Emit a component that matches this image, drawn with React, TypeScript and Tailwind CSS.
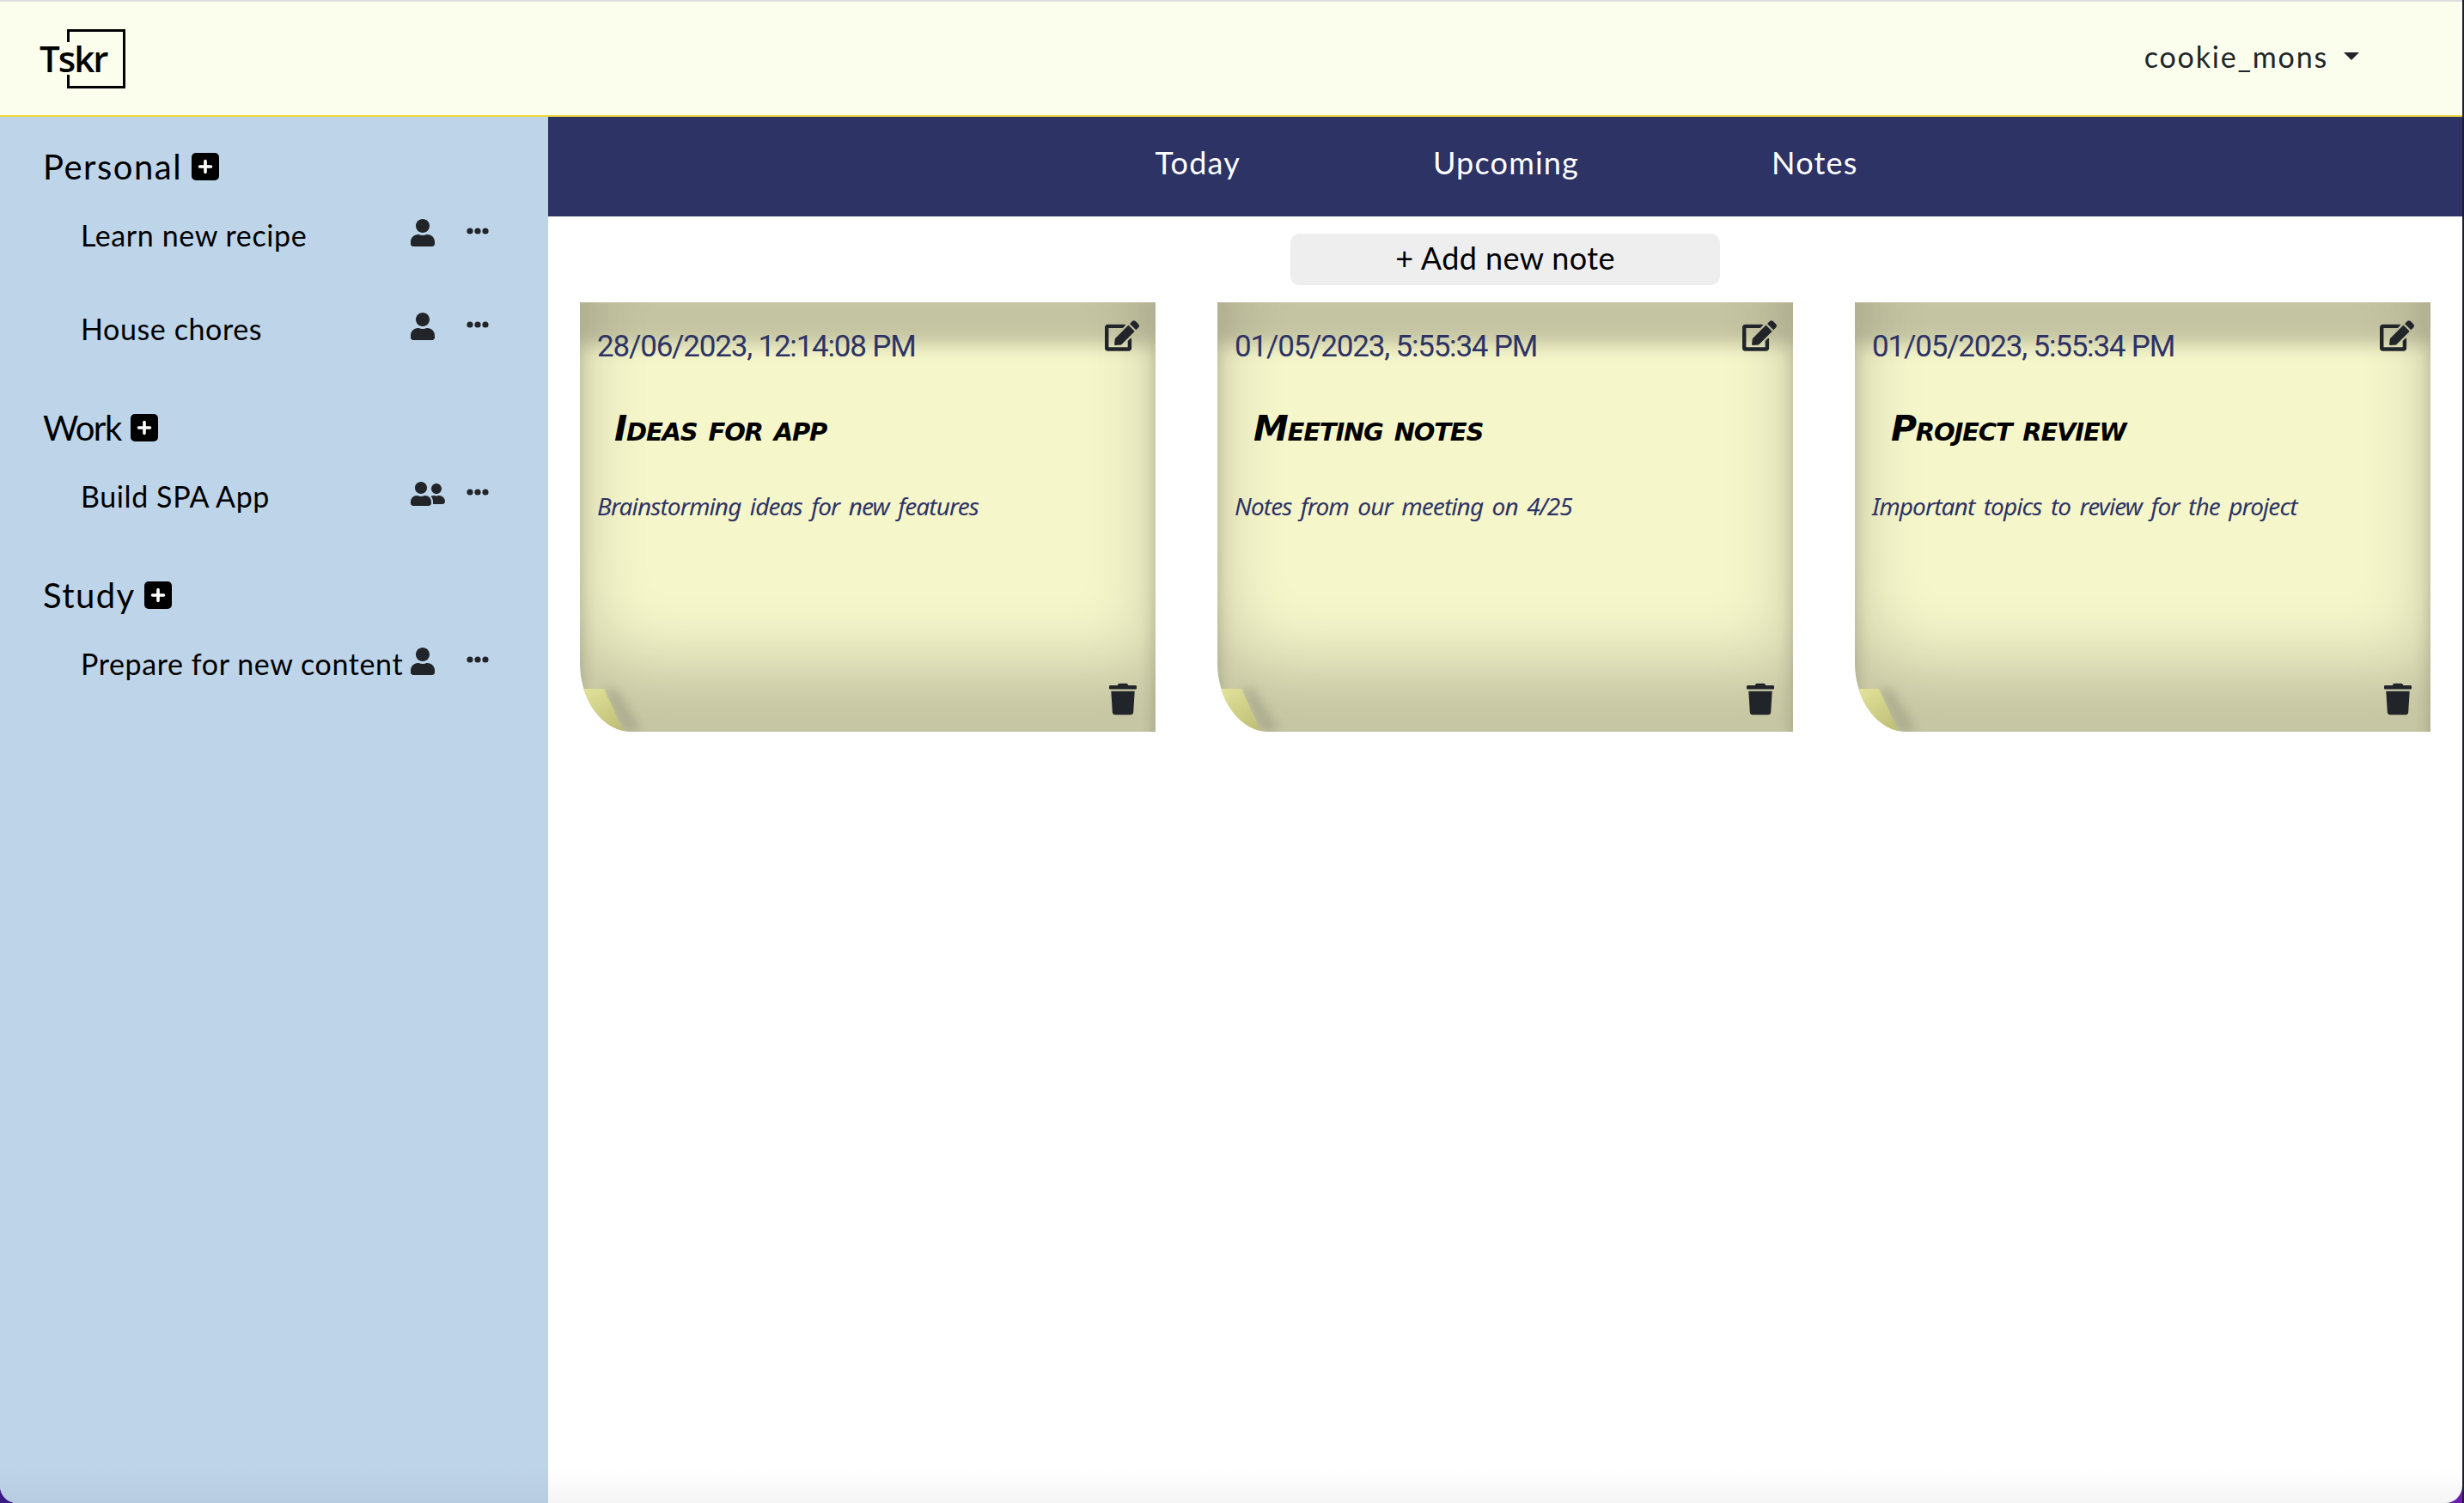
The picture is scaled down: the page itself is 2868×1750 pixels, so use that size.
import React from 'react';
import { FaUser, FaUserFriends, FaEdit, FaTrash } from 'react-icons/fa';

const GROUPS = [
  {
    name: 'Personal',
    spacing: 'tracking-[1.5px]',
    tasks: [
      { title: 'Learn new recipe', shared: false },
      { title: 'House chores', shared: false },
    ],
  },
  { name: 'Work', spacing: 'tracking-[-1.5px]', tasks: [{ title: 'Build SPA App', shared: true }] },
  { name: 'Study', spacing: 'tracking-[1.4px]', tasks: [{ title: 'Prepare for new content', shared: false }] },
];

const NOTES = [
  { date: '28/06/2023, 12:14:08 PM', title: 'Ideas for app', body: 'Brainstorming ideas for new features', titleOffset: 'pl-[20px]' },
  { date: '01/05/2023, 5:55:34 PM', title: 'Meeting notes', body: 'Notes from our meeting on 4/25', titleOffset: 'pl-[22px]' },
  { date: '01/05/2023, 5:55:34 PM', title: 'Project review', body: 'Important topics to review for the project', titleOffset: 'pl-[22px]' },
];

function Note({ note, id }: { note: (typeof NOTES)[number]; id: number }) {
  return (
    <div className="relative w-[670px] h-[500px] overflow-hidden rounded-bl-[60px_80px] bg-[#f6f6cb] shadow-[inset_0_-80px_80px_rgba(0,0,0,0.2),inset_0_50px_20px_rgba(0,0,0,0.2)] px-[20px] pt-[26px]">
      <div className="flex justify-between items-start">
        <span className="text-[35px] leading-[52px] text-[#2d3365] font-['Roboto',sans-serif] tracking-[-1.2px]">{note.date}</span>
        <FaEdit className="text-[#212529] w-[40px] h-[38px] -mr-[1px] -mt-[6px]" />
      </div>
      <h2 className={`${note.titleOffset} mt-[44px] text-[41px] leading-[50px] font-bold italic text-black [font-variant:small-caps] font-['DejaVu_Sans',sans-serif] tracking-[-1.2px]`}>
        {note.title}
      </h2>
      <p className="mt-[44px] text-[28px] leading-[42px] italic text-[#2d3365] font-['Noto_Sans',sans-serif] tracking-[-0.9px] [word-spacing:4px]">{note.body}</p>
      <FaTrash className="absolute right-[22px] bottom-[18px] text-[#212529] w-[32px] h-[40px]" />
      {/* page curl in the lower left corner */}
      <svg className="absolute left-0 bottom-0" width="110" height="70" viewBox="0 0 110 70">
        <defs>
          <linearGradient id={`curl-${id}`} x1="0.1" y1="0" x2="0.8" y2="1">
            <stop offset="0" stopColor="#e2e29a" />
            <stop offset="1" stopColor="#bfbf78" />
          </linearGradient>
        </defs>
        <path className="blur-[6px]" d="M28 20 L51 70 L72 70 L42 20 Z" fill="#000" fillOpacity="0.13" />
        <path d="M0 20 L28 20 L51 70 L0 70 Z" fill={`url(#curl-${id})`} />
      </svg>
    </div>
  );
}

export default function App() {
  return (
    <div className="w-[2868px] h-[1750px] bg-[#1e1f33] overflow-hidden font-['Lato',sans-serif]">
      <div className="relative w-[2866px] h-[1750px] bg-gradient-to-r from-[#3b1a86] to-[#6a1fa8]">
        <div className="relative w-full h-full overflow-hidden rounded-b-[20px] bg-white flex flex-col">
          {/* top bar */}
          <header className="h-[136px] shrink-0 bg-[#fbfeec] border-t-2 border-t-[#dedede] border-b-2 border-b-[#f0d93f] flex items-center justify-between pl-[46px] pr-[120px]">
            <div className="relative w-[100px] h-[69px]">
              <div className="absolute left-[32px] top-0 w-[68px] h-[69px] border-[3px] border-black" />
              <span className="absolute left-0 top-[15px] text-[42px] leading-[38px] font-semibold text-black font-['Open_Sans',sans-serif] tracking-[-2px] bg-[#fbfeec]">Tskr</span>
            </div>
            <div className="flex items-center gap-[18px] text-[#212529] -mt-[4px]">
              <span className="text-[34px] leading-[48px] tracking-[1.8px]">cookie_mons</span>
              <span className="w-0 h-0 mt-[-2px] border-x-[9px] border-x-transparent border-t-[9px] border-t-[#212529]" />
            </div>
          </header>
          <div className="flex flex-1 min-h-0">
            {/* left rail */}
            <aside className="w-[638px] shrink-0 bg-[#bed4e9] pl-[50px] pt-[32px]">
              {GROUPS.map((group) => (
                <section key={group.name} className="mb-[32px]">
                  <div className={`${group.spacing} flex items-center gap-[11px] h-[52px] text-[40px] leading-[52px] text-black`}>
                    <span>{group.name}</span>
                    <svg width="32" height="32" viewBox="0 0 32 32">
                      <rect width="32" height="32" rx="5" fill="#000" />
                      <path d="M16 9.5v13M9.5 16h13" stroke="#fff" strokeWidth="3.6" strokeLinecap="round" />
                    </svg>
                  </div>
                  <ul className="mt-[23px]">
                    {group.tasks.map((task) => (
                      <li key={task.title} className="flex items-center h-[109px] pl-[44px] pb-[48px] last:h-[88px] last:pb-[26px]">
                        <span className="w-[384px] text-[34px] leading-[48px] text-black whitespace-nowrap tracking-[0.6px]">{task.title}</span>
                        <div className="w-[65px] -mt-[6px]">
                          {task.shared ? (
                            <FaUserFriends className="w-[40px] h-[32px] text-[#212529]" />
                          ) : (
                            <FaUser className="w-[28px] h-[32px] text-[#212529]" />
                          )}
                        </div>
                        <svg className="-mt-[10px] text-[#212529]" width="26" height="8" viewBox="0 0 26 8" fill="currentColor">
                          <circle cx="4" cy="4" r="3.6" />
                          <circle cx="13" cy="4" r="3.6" />
                          <circle cx="22" cy="4" r="3.6" />
                        </svg>
                      </li>
                    ))}
                  </ul>
                </section>
              ))}
            </aside>
            <main className="flex-1 min-w-0">
              <nav className="h-[116px] bg-[#2d3365] flex items-center justify-center gap-[224px] pb-[10px] pl-[3px] text-[36px] leading-[48px] text-white tracking-[1.2px]">
                <span>Today</span>
                <span>Upcoming</span>
                <span>Notes</span>
              </nav>
              <div className="px-[37px] pt-[20px]">
                <div className="flex justify-center">
                  <button className="w-[500px] h-[60px] rounded-[10px] bg-[#eeeeee] pb-[4px] text-[36px] leading-[48px] text-black tracking-[0.4px]">+ Add new note</button>
                </div>
                <div className="mt-[20px] flex justify-between">
                  {NOTES.map((note, i) => (
                    <Note key={i} note={note} id={i} />
                  ))}
                </div>
              </div>
            </main>
          </div>
          {/* faint darkening along the window's bottom edge */}
          <div className="absolute inset-x-0 bottom-0 h-[40px] pointer-events-none bg-gradient-to-b from-transparent to-black/[0.04]" />
        </div>
      </div>
    </div>
  );
}
